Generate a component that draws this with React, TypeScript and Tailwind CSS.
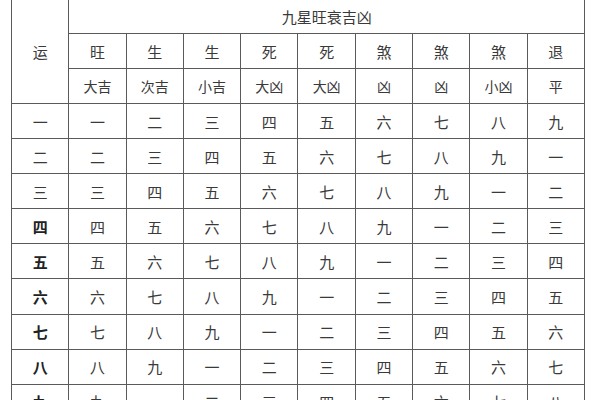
const nums = ['一', '二', '三', '四', '五', '六', '七', '八', '九'];

const stars = ['旺', '生', '生', '死', '死', '煞', '煞', '煞', '退'];
const luck = ['大吉', '次吉', '小吉', '大凶', '大凶', '凶', '凶', '小凶', '平'];

// each row: yun n, then stars starting at n cycling through nine
const rows = nums.map((n, i) => ({
  yun: n,
  cells: Array.from({ length: 9 }).map((_, j) => nums[(i + j) % 9]),
}));

const cell = 'border border-[#5a5a5a] text-center align-middle p-0';

export default function App() {
  return (
    <div
      className="w-[600px] h-[400px] overflow-hidden bg-white text-[#3a3a3a]"
      style={{ fontFamily: '"Noto Sans CJK SC", "Noto Sans", sans-serif' }}
    >
      <table className="ml-[11px] -mt-[2px] w-[574px] table-fixed border-collapse text-[15px] leading-none">
        <tbody>
          <tr className="h-[35px]">
            <td rowSpan={3} className={cell}>
              运
            </td>
            <td colSpan={9} className={cell}>
              九星旺衰吉凶
            </td>
          </tr>
          <tr className="h-[35px]">
            {stars.map((s, i) => (
              <td key={i} className={cell}>
                {s}
              </td>
            ))}
          </tr>
          <tr className="h-[35px]">
            {luck.map((s, i) => (
              <td key={i} className={`${cell} text-[14px]`}>
                {s}
              </td>
            ))}
          </tr>
          {rows.map((r, i) => (
            <tr key={r.yun} className="h-[35.1px]">
              <td className={`${cell} ${i >= 3 ? 'font-bold text-[#222]' : ''}`}>{r.yun}</td>
              {r.cells.map((c, j) => (
                <td key={j} className={cell}>
                  {c}
                </td>
              ))}
            </tr>
          ))}
        </tbody>
      </table>
    </div>
  );
}
